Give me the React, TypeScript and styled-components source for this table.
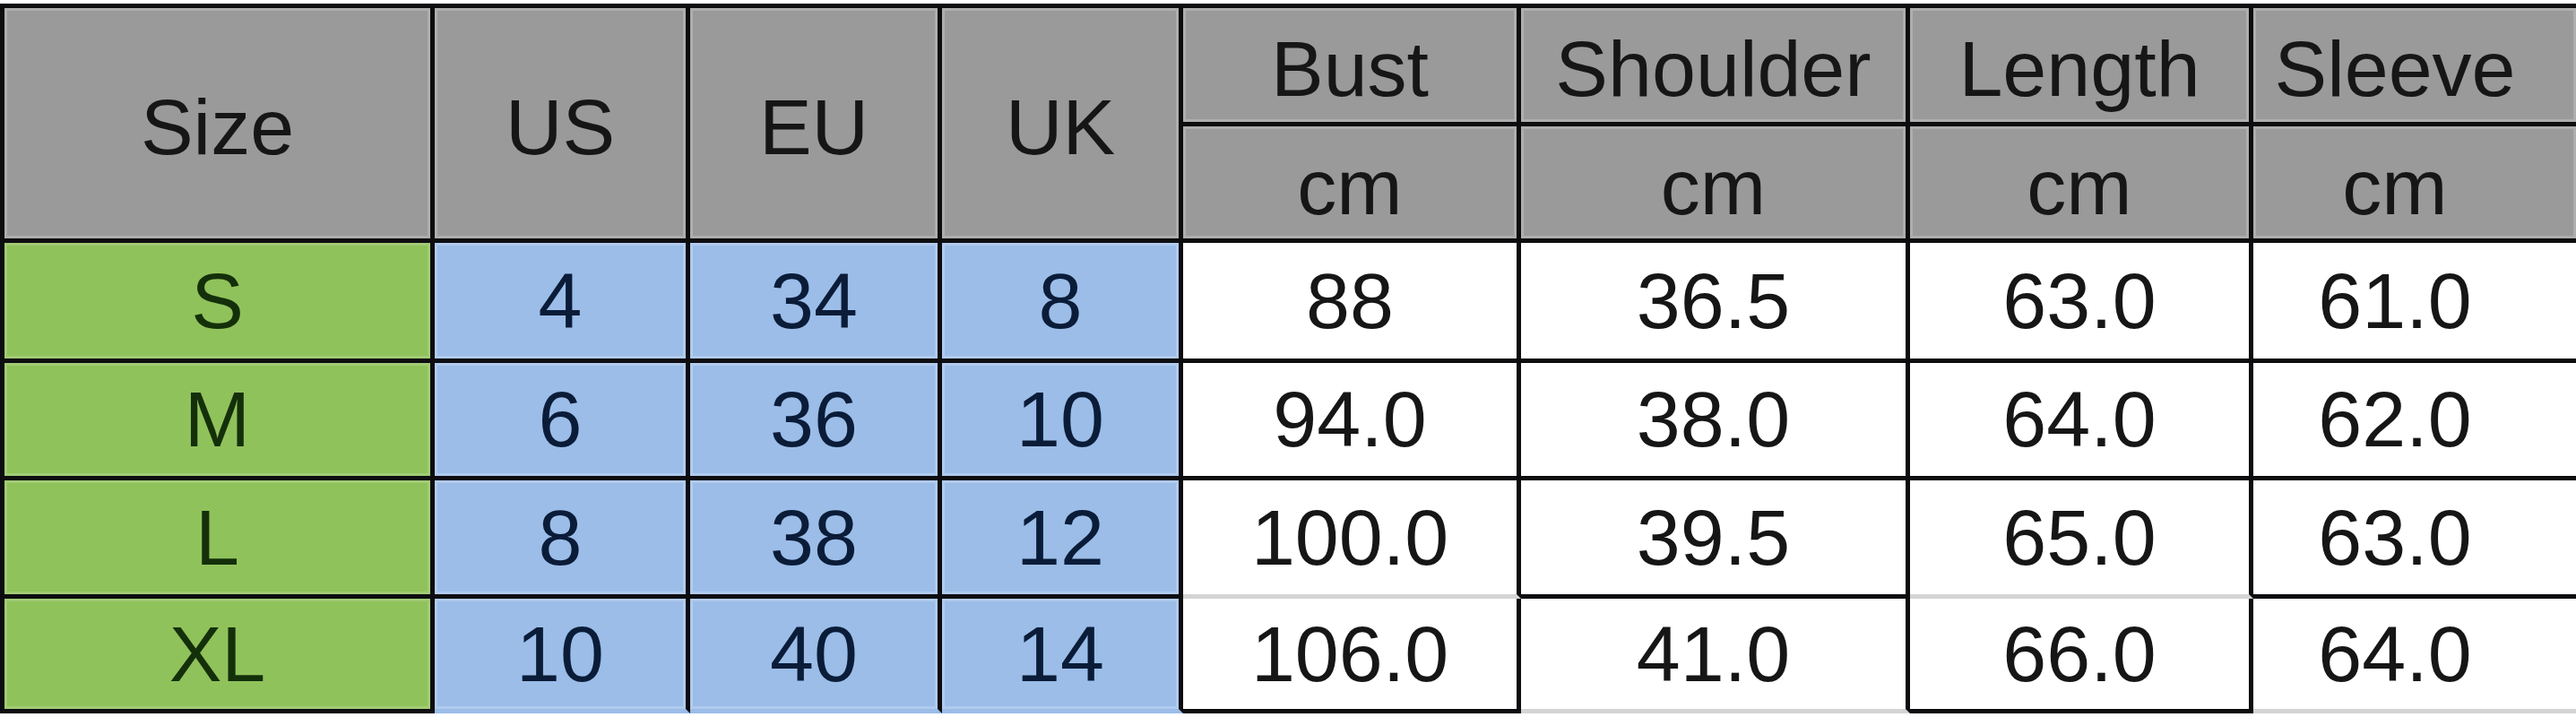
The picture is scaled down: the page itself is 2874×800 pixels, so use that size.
import styled, { createGlobalStyle } from 'styled-components';

const GlobalStyle = createGlobalStyle`
  html, body {
    margin: 0;
    padding: 0;
    background: #ffffff;
  }
`;

const LINE = '#0d0d10';

type Edge = 'line' | 'faint' | 'none';
type Tone = 'head' | 'size' | 'conv' | 'measure';

const toneColors: Record<Tone, { bg: string; fg: string; glow: string }> = {
  head: { bg: '#9a9a9a', fg: '#161616', glow: 'rgba(255,255,255,0.2)' },
  size: { bg: '#90c25b', fg: '#14300a', glow: 'rgba(255,255,255,0.16)' },
  conv: { bg: '#9bbde8', fg: '#0a1c38', glow: 'rgba(255,255,255,0.22)' },
  measure: { bg: '#ffffff', fg: '#161616', glow: 'rgba(255,255,255,0)' },
};

const Chart = styled.div`
  display: grid;
  grid-template-columns: 480px 285px 281px 269px 377px 434px 383px 360px;
  grid-template-rows: 132px 130px 134px 131px 132px 128px;
  width: 2874px;
  box-sizing: border-box;
  margin-top: 4px;
  border-top: 5px solid ${LINE};
  border-left: 5px solid ${LINE};
  font-family: 'Liberation Sans', Arial, sans-serif;
  font-size: 88px;
`;

const Cell = styled.div<{ $tone: Tone; $bottom?: Edge; $lastCol?: boolean; $span?: number }>`
  box-sizing: border-box;
  display: flex;
  align-items: center;
  justify-content: center;
  padding-right: ${(p) => (p.$lastCol ? '44px' : '0')};
  grid-row: ${(p) => (p.$span ? `span ${p.$span}` : 'auto')};
  background: ${(p) => toneColors[p.$tone].bg};
  color: ${(p) => toneColors[p.$tone].fg};
  box-shadow: inset 0 0 0 3px ${(p) => toneColors[p.$tone].glow};
  border-right: ${(p) => (p.$lastCol ? 'none' : `5px solid ${LINE}`)};
  border-bottom: 5px solid
    ${(p) =>
      p.$bottom === 'faint' ? '#d4d4d4' : p.$bottom === 'none' ? toneColors[p.$tone].bg : LINE};
  line-height: 1;
  white-space: nowrap;
`;

const HeadLabel = styled.span<{ $unit?: boolean }>`
  position: relative;
  top: ${(p) => (p.$unit ? '5px' : '4px')};
`;

const measures = ['Bust', 'Shoulder', 'Length', 'Sleeve'];

const rows = [
  { size: 'S', conv: ['4', '34', '8'], cm: ['88', '36.5', '63.0', '61.0'] },
  { size: 'M', conv: ['6', '36', '10'], cm: ['94.0', '38.0', '64.0', '62.0'] },
  { size: 'L', conv: ['8', '38', '12'], cm: ['100.0', '39.5', '65.0', '63.0'] },
  { size: 'XL', conv: ['10', '40', '14'], cm: ['106.0', '41.0', '66.0', '64.0'] },
];

// the scan has odd lines round Bust / Length in the last two rows
function measureEdge(rowIndex: number, col: number): Edge {
  const boxed = col === 0 || col === 2;
  if (rowIndex === 2 && boxed) return 'faint';
  if (rowIndex === 3) return boxed ? 'line' : 'faint';
  return 'line';
}

export default function App() {
  const last = rows.length - 1;

  return (
    <>
      <GlobalStyle />
      <Chart>
        {['Size', 'US', 'EU', 'UK'].map((h) => (
          <Cell key={h} $tone="head" $span={2}>
            <HeadLabel>{h}</HeadLabel>
          </Cell>
        ))}
        {measures.map((m, i) => (
          <Cell key={m} $tone="head" $lastCol={i === measures.length - 1}>
            <HeadLabel>{m}</HeadLabel>
          </Cell>
        ))}
        {measures.map((m, i) => (
          <Cell key={`${m}-cm`} $tone="head" $lastCol={i === measures.length - 1}>
            <HeadLabel $unit>cm</HeadLabel>
          </Cell>
        ))}

        {rows.map((r, ri) => (
          <>
            <Cell key={`${r.size}-s`} $tone="size">
              {r.size}
            </Cell>
            {r.conv.map((v, ci) => (
              <Cell key={`${r.size}-c${ci}`} $tone="conv" $bottom={ri === last ? 'none' : 'line'}>
                {v}
              </Cell>
            ))}
            {r.cm.map((v, ci) => (
              <Cell
                key={`${r.size}-m${ci}`}
                $tone="measure"
                $bottom={measureEdge(ri, ci)}
                $lastCol={ci === r.cm.length - 1}
              >
                {v}
              </Cell>
            ))}
          </>
        ))}
      </Chart>
    </>
  );
}
